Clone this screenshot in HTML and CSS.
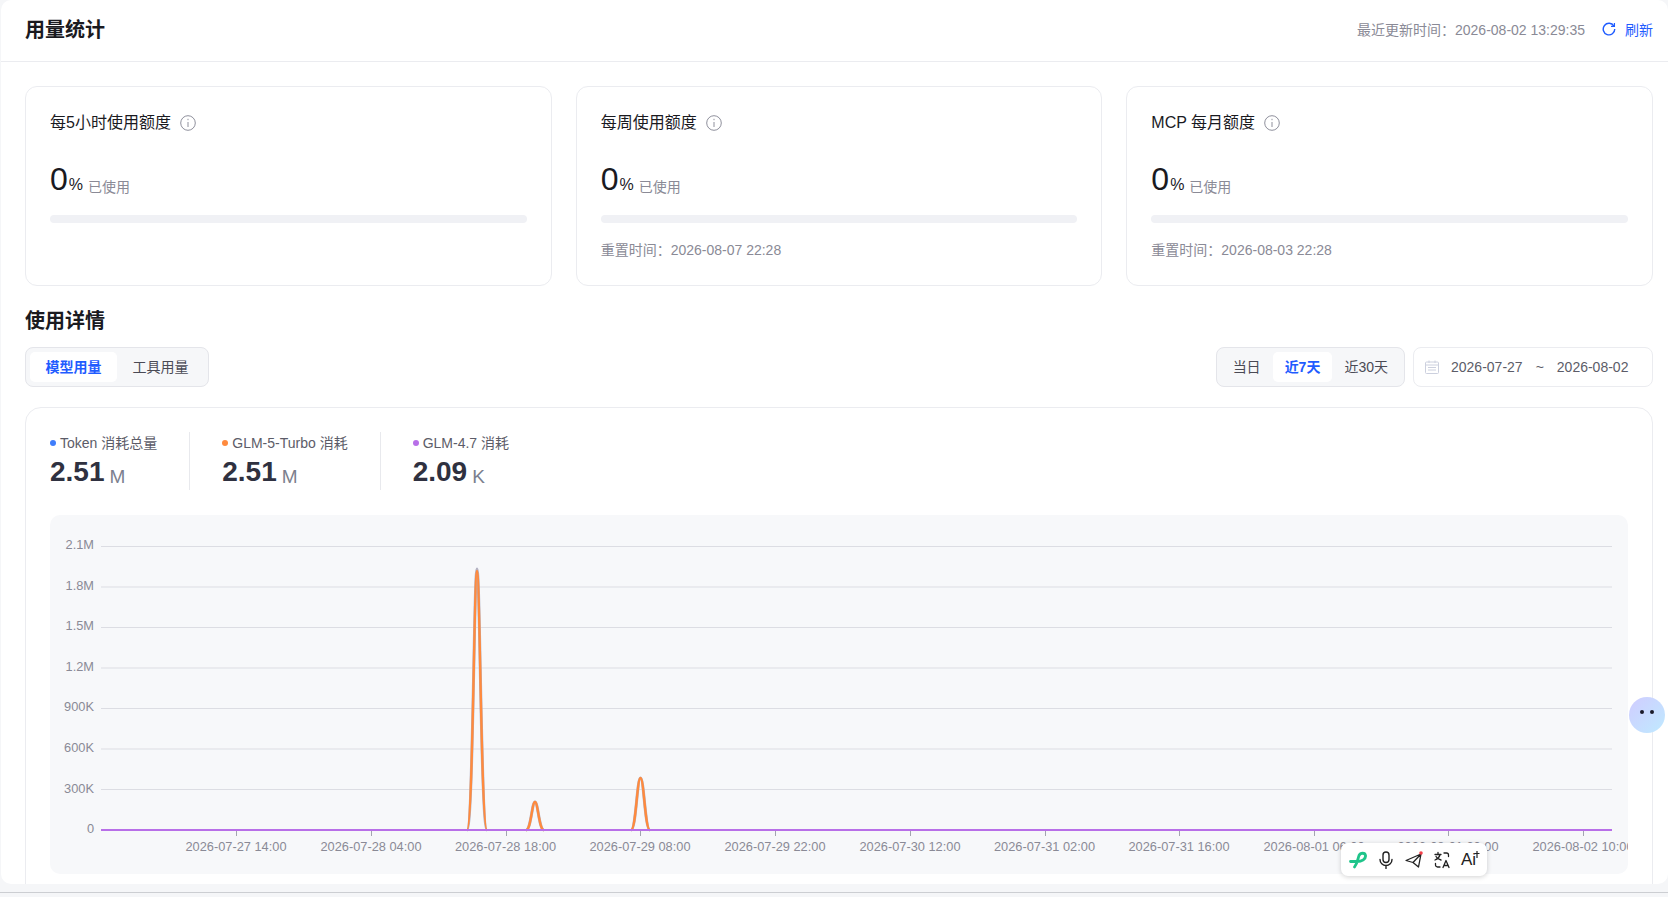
FILE: index.html
```html
<!DOCTYPE html>
<html lang="zh-CN">
<head>
    <meta charset="UTF-8">
    <meta name="viewport" content="width=device-width, initial-scale=1.0">
    <title>用量统计</title>
    <link rel="stylesheet" href="styles.css">
</head>
<body>

<div class="panel">
    <header class="page-head">
        <h1>用量统计</h1>
        <div class="head-right">
            <span class="updated">最近更新时间：2026-08-02 13:29:35</span>
            <a class="refresh" href="#">
                <svg class="refresh-icon" viewBox="0 0 16 16" fill="none" stroke="currentColor" stroke-width="1.6"><path d="M13.6 4.6A6.6 6.6 0 1 0 14.6 8"/><path d="M14.2 1.200v3.900h-3.900" stroke-width="1.4"/></svg>
                刷新
            </a>
        </div>
    </header>

    <main class="content">
        <section class="quota-grid">
            <div class="quota-card">
                <div class="quota-title">每5小时使用额度
                    <svg class="info-icon" viewBox="0 0 16 16" fill="none" stroke="currentColor"><circle cx="8" cy="8" r="7.300"/><path d="M8 7v5M8 3.800v1.400"/></svg>
                </div>
                <div class="quota-value"><span class="num">0</span><span class="pct">%</span><span class="used">已使用</span></div>
                <div class="progress"></div>
            </div>
            <div class="quota-card">
                <div class="quota-title">每周使用额度
                    <svg class="info-icon" viewBox="0 0 16 16" fill="none" stroke="currentColor"><circle cx="8" cy="8" r="7.300"/><path d="M8 7v5M8 3.800v1.400"/></svg>
                </div>
                <div class="quota-value"><span class="num">0</span><span class="pct">%</span><span class="used">已使用</span></div>
                <div class="progress"></div>
                <div class="reset">重置时间：2026-08-07 22:28</div>
            </div>
            <div class="quota-card">
                <div class="quota-title">MCP 每月额度
                    <svg class="info-icon" viewBox="0 0 16 16" fill="none" stroke="currentColor"><circle cx="8" cy="8" r="7.300"/><path d="M8 7v5M8 3.800v1.400"/></svg>
                </div>
                <div class="quota-value"><span class="num">0</span><span class="pct">%</span><span class="used">已使用</span></div>
                <div class="progress"></div>
                <div class="reset">重置时间：2026-08-03 22:28</div>
            </div>
        </section>

        <h2>使用详情</h2>

        <div class="filter-row">
            <div class="segmented">
                <button class="seg-btn wide active">模型用量</button>
                <button class="seg-btn wide">工具用量</button>
            </div>
            <div class="filter-right">
                <div class="segmented">
                    <button class="seg-btn">当日</button>
                    <button class="seg-btn active">近7天</button>
                    <button class="seg-btn">近30天</button>
                </div>
                <div class="date-range">
                    <svg class="cal-icon" viewBox="0 0 14 14" fill="none" stroke="currentColor"><rect x="0.500" y="2" width="13" height="11.500" rx="1"/><path d="M0.500 5h13M4 0.500V3M10 0.500V3M3 7.500h8M3 10h8"/></svg>
                    <span>2026-07-27</span>
                    <span class="tilde">~</span>
                    <span>2026-08-02</span>
                </div>
            </div>
        </div>

        <section class="usage-card">
            <div class="stats">
                <div class="stat">
                    <div class="stat-label"><i class="dot blue"></i>Token 消耗总量</div>
                    <div class="stat-value">2.51<small>M</small></div>
                </div>
                <div class="stat">
                    <div class="stat-label"><i class="dot orange"></i>GLM-5-Turbo 消耗</div>
                    <div class="stat-value">2.51<small>M</small></div>
                </div>
                <div class="stat">
                    <div class="stat-label"><i class="dot purple"></i>GLM-4.7 消耗</div>
                    <div class="stat-value">2.09<small>K</small></div>
                </div>
            </div>

            <div class="chart">
                <!-- viewBox uses page coordinates, easier to read the ticks -->
                <svg class="chart-svg" viewBox="50 515 1578 359">
                    <g class="grid">
                        <path d="M101 546.500H1612M101 587H1612M101 627.500H1612M101 668H1612M101 708.500H1612M101 749H1612M101 789.500H1612"/>
                    </g>
                    <g class="y-labels">
                        <text x="94" y="549">2.1M</text>
                        <text x="94" y="590">1.8M</text>
                        <text x="94" y="630">1.5M</text>
                        <text x="94" y="671">1.2M</text>
                        <text x="94" y="711">900K</text>
                        <text x="94" y="752">600K</text>
                        <text x="94" y="793">300K</text>
                        <text x="94" y="833">0</text>
                    </g>
                    <g class="ticks">
                        <path d="M236.500 830v6M371.500 830v6M506.500 830v6M640.500 830v6M775.500 830v6M910.500 830v6M1045.500 830v6M1179.500 830v6M1314.500 830v6M1448.500 830v6M1583.500 830v6"/>
                    </g>
                    <g class="x-labels">
                        <text x="236" y="851">2026-07-27 14:00</text>
                        <text x="371" y="851">2026-07-28 04:00</text>
                        <text x="505.500" y="851">2026-07-28 18:00</text>
                        <text x="640" y="851">2026-07-29 08:00</text>
                        <text x="775" y="851">2026-07-29 22:00</text>
                        <text x="910" y="851">2026-07-30 12:00</text>
                        <text x="1044.500" y="851">2026-07-31 02:00</text>
                        <text x="1179" y="851">2026-07-31 16:00</text>
                        <text x="1314" y="851">2026-08-01 06:00</text>
                        <text x="1448" y="851">2026-08-01 20:00</text>
                        <text x="1583" y="851">2026-08-02 10:00</text>
                    </g>
                    <g class="line line-total">
                        <path d="M467 830C473 830 474 569 477 569C480 569 481 830 487 830"/>
                        <path d="M526 830C531 830 532 802 535 802C538 802 539 830 544 830"/>
                        <path d="M631 830C636 830 637 778 640.500 778C644 778 645 830 650 830"/>
                    </g>
                    <g class="line line-turbo">
                        <path d="M467 830C473 830 474 571 477 571C480 571 481 830 487 830"/>
                        <path d="M526 830C531 830 532 802 535 802C538 802 539 830 544 830"/>
                        <path d="M631 830C636 830 637 778 640.500 778C644 778 645 830 650 830"/>
                    </g>
                    <path class="line-glm" d="M101 830H1612"/>
                </svg>
            </div>
        </section>
    </main>
</div>

<div class="bottom-rule"></div>

<!-- browser extension things floating over the page -->
<div class="float-bot"><i></i><i></i></div>

<div class="float-tools">
    <svg viewBox="0 0 18 18" fill="none" stroke="#1fc48a" stroke-width="2.800" stroke-linecap="round"><path d="M1.500 10.500H8C13 10.500 17 8 16.500 4.500C16 1.500 11.500 1.500 10 4.500C9 7 8.500 12 5.500 16"/></svg>
    <svg viewBox="0 0 18 18" fill="none" stroke="#222" stroke-width="1.400" stroke-linecap="round"><rect x="6" y="1" width="6" height="10.500" rx="3"/><path d="M3 8.500a6 6 0 0 0 12 0M9 14.500v3"/></svg>
    <svg class="plane" viewBox="0 0 18 18" fill="none" stroke="#222" stroke-width="1.300" stroke-linejoin="round"><path d="M1 9.500L16 3L13.500 16L8 11.500zM8 11.500L16 3"/><circle cx="16" cy="2" r="1.800" fill="#f5404a" stroke="none"/></svg>
    <svg viewBox="0 0 18 18" fill="none" stroke="#222" stroke-width="1.300" stroke-linecap="round" stroke-linejoin="round"><path d="M2 3.500h6M5 1.500v2M7 3.500C6.500 6 4.500 8 2 9M3 5.500C4 7.500 5.500 8.500 8 9M11 2h2.500a2 2 0 0 1 2 2v1.500M7 16H4.500a2 2 0 0 1-2-2v-1.500M10 16.500l3-7 3 7M11 14.500h4"/></svg>
    <div class="ai-mark">Ai<svg viewBox="0 0 6 8" fill="none" stroke="#222" stroke-width="1.200"><path d="M3 0v7M0.500 2.500h5"/></svg></div>
</div>

</body>
</html>
```

FILE: styles.css
```css
* {
    box-sizing: border-box;
}

html, body {
    height: 100%;
}

body {
    margin: 0;
    background: #f5f6f8;
    color: #1a1a1f;
    font-family: "Liberation Sans", "Noto Sans CJK SC", sans-serif;
    font-size: 14px;
    overflow: hidden;
    position: relative;
}

.panel {
    height: 884px;
    margin-left: 1px;
    background: #fff;
    border-radius: 10px;
    overflow: hidden;
}

.bottom-rule {
    height: 5px;
    margin-top: 8px;
    border-top: 1px solid #ccced2;
}

.page-head {
    height: 62px;
    padding: 0 15px 2px 24px;
    display: flex;
    align-items: center;
    justify-content: space-between;
    border-bottom: 1px solid #ebecf0;
}

.page-head h1 {
    margin: 0;
    font-size: 20px;
    line-height: 28px;
    font-weight: 700;
}

.head-right {
    display: flex;
    align-items: center;
    gap: 17px;
    padding-bottom: 2px;
}

.updated {
    color: #8a8a96;
}

.refresh {
    display: flex;
    align-items: center;
    gap: 9px;
    color: #1f5cff;
    text-decoration: none;
}

.refresh-icon {
    width: 14px;
    height: 14px;
}

.content {
    padding: 24px 15px 0 24px;
}

.quota-grid {
    display: grid;
    grid-template-columns: repeat(3, 1fr);
    gap: 24px;
}

.quota-card {
    height: 200px;
    padding: 25px 24px 24px;
    border: 1px solid #ebecf0;
    border-radius: 12px;
}

.quota-title {
    display: flex;
    align-items: center;
    gap: 9px;
    font-size: 16px;
    line-height: 22px;
}

.info-icon {
    width: 16px;
    height: 16px;
    color: #8f909c;
}

.quota-value {
    margin-top: 22px;
    height: 46px;
    line-height: 46px;
}

.quota-value .num {
    font-size: 32px;
}

.quota-value .pct {
    font-size: 16px;
    margin-left: 1px;
}

.quota-value .used {
    margin-left: 5px;
    font-size: 14px;
    color: #8a8a96;
    vertical-align: -2px;
}

.progress {
    margin-top: 13px;
    height: 8px;
    border-radius: 4px;
    background: #f0f1f5;
}

.reset {
    margin-top: 17px;
    line-height: 20px;
    color: #8a8a96;
}

.content h2 {
    margin: 21px 0 12px;
    font-size: 20px;
    line-height: 28px;
    font-weight: 700;
}

.filter-row {
    display: flex;
    justify-content: space-between;
    align-items: center;
}

.filter-right {
    display: flex;
    gap: 8px;
}

.segmented {
    height: 40px;
    padding: 4px;
    display: flex;
    background: #f6f7f9;
    border: 1px solid #e4e5ea;
    border-radius: 8px;
}

.seg-btn {
    height: 30px;
    padding: 0 12px 3px;
    border: 0;
    border-radius: 5px;
    background: transparent;
    color: #4a4a55;
    font: inherit;
}

.seg-btn.wide {
    width: 87px;
    padding: 0 0 3px;
}

.seg-btn.active {
    background: #fff;
    color: #1f5cff;
    font-weight: 700;
}

.date-range {
    width: 240px;
    height: 40px;
    padding: 0 12px 0 11px;
    display: flex;
    align-items: center;
    background: #fff;
    border: 1px solid #ebecf0;
    border-radius: 8px;
    color: #5c5c68;
}

.cal-icon {
    width: 14px;
    height: 14px;
    margin-right: 12px;
    color: #ccd0de;
}

.tilde {
    margin: 0 13px;
}

.usage-card {
    margin-top: 20px;
    height: 520px;
    padding: 24px;
    border: 1px solid #ebecf0;
    border-radius: 16px;
}

.stats {
    display: flex;
    height: 58px;
}

.stat {
    padding-right: 32px;
    margin-right: 32px;
    border-right: 1px solid #e8e9ed;
}

.stat:last-child {
    border-right: 0;
}

.stat-label {
    display: flex;
    align-items: center;
    line-height: 22px;
    color: #5c5c68;
}

.dot {
    width: 6px;
    height: 6px;
    margin-right: 4px;
    border-radius: 50%;
}

.dot.blue {
    background: #3f7dfb;
}

.dot.orange {
    background: #ff8a3d;
}

.dot.purple {
    background: #b86fe8;
}

.stat-value {
    font-size: 28px;
    line-height: 36px;
    font-weight: 700;
    color: #2f3140;
}

.stat-value small {
    margin-left: 5px;
    font-size: 19px;
    font-weight: 400;
    color: #7c7f8e;
    vertical-align: -2px;
}

.chart {
    margin-top: 25px;
    height: 359px;
    background: #f7f8fa;
    border-radius: 10px;
    overflow: hidden;
}

.chart-svg {
    display: block;
    width: 100%;
    height: 100%;
}

.grid path {
    stroke: #dcdde3;
    stroke-width: 1;
    fill: none;
}

.ticks path {
    stroke: #a3a5b0;
    fill: none;
}

.y-labels text,
.x-labels text {
    font-size: 12.800px;
    fill: #8a8a96;
}

.y-labels text {
    text-anchor: end;
}

.x-labels text {
    text-anchor: middle;
}

.line path {
    fill: none;
}

.line-total path {
    stroke: #b4b3c4;
    stroke-width: 3;
}

.line-turbo path {
    stroke: #ff8a3d;
    stroke-width: 2.400;
}

.line-glm {
    fill: none;
    stroke: #b86fe8;
    stroke-width: 2.200;
}

.float-bot {
    position: absolute;
    left: 1629px;
    top: 697px;
    width: 36px;
    height: 36px;
    display: flex;
    justify-content: center;
    gap: 6px;
    padding-top: 13px;
    border-radius: 50%;
    background: linear-gradient(135deg, #d0ccff, #bfeaff);
}

.float-bot i {
    width: 4px;
    height: 4px;
    border-radius: 50%;
    background: #1a1a2a;
}

.float-tools {
    position: absolute;
    left: 1341px;
    top: 843px;
    width: 146px;
    height: 33px;
    padding: 0 8px;
    display: flex;
    align-items: center;
    justify-content: space-between;
    background: #fff;
    border-radius: 7px;
    box-shadow: 0 1px 5px rgba(0, 0, 0, 0.18);
}

.float-tools > svg {
    width: 18px;
    height: 18px;
    flex: none;
}

.ai-mark {
    position: relative;
    width: 18px;
    font-size: 17px;
    line-height: 18px;
    color: #222;
}

.ai-mark svg {
    position: absolute;
    right: -1px;
    top: 0;
    width: 6px;
    height: 8px;
}
```
